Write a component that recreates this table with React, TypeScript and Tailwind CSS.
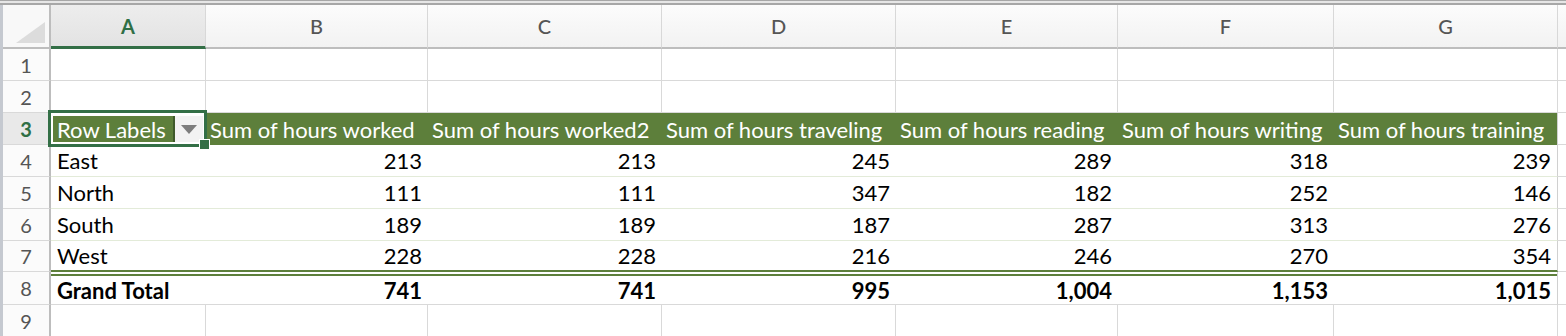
import React from "react";

const colW = ["w-[155px]", "w-[222px]", "w-[234px]", "w-[234px]", "w-[222px]", "w-[216px]", "w-[224px]"];
const letters = ["A", "B", "C", "D", "E", "F", "G"];
const heads = [
  "Sum of hours worked",
  "Sum of hours worked2",
  "Sum of hours traveling",
  "Sum of hours reading",
  "Sum of hours writing",
  "Sum of hours training",
];
const data: [string, ...string[]][] = [
  ["East", "213", "213", "245", "289", "318", "239"],
  ["North", "111", "111", "347", "182", "252", "146"],
  ["South", "189", "189", "187", "287", "313", "276"],
  ["West", "228", "228", "216", "246", "270", "354"],
];
const total = ["Grand Total", "741", "741", "995", "1,004", "1,153", "1,015"];

const GREEN = "#5d7f3b";

function RowHead({ n, h = "h-[32px]", selected = false }: { n: number; h?: string; selected?: boolean }) {
  return (
    <div
      className={`${h} w-[48px] shrink-0 border-r-2 border-b border-r-[#bdbdbd] border-b-[#d9d9d9] flex items-center justify-center text-[20px] ${
        selected ? "bg-[#e9e9e9] text-[#2f6f45] font-bold" : "bg-[#fbfbfb] text-[#555555]"
      }`}
    >
      {n}
    </div>
  );
}

function EmptyRow({ n }: { n: number }) {
  return (
    <div className="flex">
      <RowHead n={n} />
      {colW.map((w, i) => (
        <div key={i} className={`${w} h-[32px] shrink-0 border-r border-b border-[#d9d9d9]`} />
      ))}
      <div className="h-[32px] flex-1 border-b border-[#d9d9d9]" />
    </div>
  );
}

function PivotHeader() {
  return (
    <div className="flex">
      <RowHead n={3} selected />
      <div className="relative w-[155px] h-[32px] shrink-0 bg-white pt-[3px] pb-[3px] pl-[2px] pr-[3px] flex">
        <div className="flex-1 flex items-center pl-[4px] text-white text-[22px] whitespace-nowrap" style={{ background: GREEN }}>
          Row Labels
        </div>
        <div className="w-[30px] border-l-2 border-[#3f5a2b] bg-[#f2f2f2] flex items-center justify-center">
          <svg width="16" height="9" viewBox="0 0 16 9">
            <polygon points="0,0 16,0 8,9" fill="#7d7d7d" />
          </svg>
        </div>
        <div className="absolute -left-[3px] -right-[1px] -top-[3px] -bottom-[2px] border-[3px] border-[#336f46] pointer-events-none" />
        <div className="absolute left-[148px] top-[26px] w-[11px] h-[11px] z-10 border border-white bg-[#336f46]" />
      </div>
      {heads.map((t, i) => (
        <div
          key={i}
          className={`${colW[i + 1]} h-[32px] shrink-0 flex items-center pl-[4px] text-white text-[22px] whitespace-nowrap overflow-hidden ${
            i === 5 ? "border-r border-r-[#d0d0d0]" : ""
          }`}
          style={{ background: GREEN }}
        >
          {t}
        </div>
      ))}
      <div className="h-[32px] flex-1 border-b border-[#d9d9d9]" />
    </div>
  );
}

function DataRow({ n, cells, last }: { n: number; cells: string[]; last?: boolean }) {
  const h = last ? "h-[31px]" : "h-[32px]";
  const line = last ? "border-b-2 border-b-[#5d7f3b]" : "border-b border-b-[#e3ebd9]";
  return (
    <div className="flex">
      <RowHead n={n} h={h} />
      {cells.map((c, i) => (
        <div
          key={i}
          className={`${colW[i]} ${h} shrink-0 flex items-center text-[22px] text-black whitespace-nowrap ${line} ${
            i === 0 ? "justify-start pl-[6px]" : "justify-end pr-[6px]"
          } ${i === 6 ? "border-r border-r-[#d0d0d0]" : ""}`}
        >
          {c}
        </div>
      ))}
      <div className={`${h} flex-1 border-b border-[#d9d9d9]`} />
    </div>
  );
}

function TotalRow() {
  return (
    <div className="flex">
      <RowHead n={8} h="h-[33px]" />
      {total.map((c, i) => (
        <div
          key={i}
          className={`${colW[i]} h-[33px] shrink-0 flex items-center pt-[4px] font-bold text-[22px] text-black whitespace-nowrap border-b border-b-[#d9d9d9] shadow-[inset_0_2px_0_#ffffff,inset_0_4px_0_#5d7f3b] ${
            i === 0 ? "justify-start pl-[6px]" : "justify-end pr-[6px]"
          } ${i === 6 ? "border-r border-r-[#d0d0d0]" : ""}`}
        >
          {c}
        </div>
      ))}
      <div className="h-[33px] flex-1 border-b border-[#d9d9d9]" />
    </div>
  );
}

export default function App() {
  return (
    <div className="w-[1566px] h-[336px] overflow-hidden bg-white font-['Lato',sans-serif] flex flex-col">
      <div className="h-[5px] shrink-0 border-t border-b-2 border-[#a7a7a7] bg-[#e6e6e6]" />
      <div className="flex flex-1 min-h-0">
        <div className="w-[3px] shrink-0 bg-[#c5c9d0]" />
        <div className="flex-1 min-w-0 flex flex-col">
          {/* column headers */}
          <div className="flex h-[44px] shrink-0">
            <div className="relative w-[48px] shrink-0 border-r-2 border-b-2 border-[#bdbdbd] bg-[#f8f8f8]">
              <svg className="absolute left-[13px] top-[17px]" width="29" height="21" viewBox="0 0 29 21">
                <polygon points="29,0 29,21 0,21" fill="#dcdcdc" />
              </svg>
            </div>
            {letters.map((l, i) => (
              <div
                key={l}
                className={`${colW[i]} shrink-0 flex items-center justify-center text-[20px] border-r border-r-[#d8d8d8] ${
                  i === 0
                    ? "bg-gradient-to-b from-[#ededed] to-[#e3e3e3] border-b-[3px] border-b-[#336f46] text-[#2f6f45] font-bold"
                    : "bg-gradient-to-b from-[#fcfcfc] to-[#f2f2f2] border-b-2 border-b-[#bdbdbd] text-[#555555] font-medium"
                }`}
              >
                {l}
              </div>
            ))}
            <div className="flex-1 bg-gradient-to-b from-[#fcfcfc] to-[#f2f2f2] border-b-2 border-b-[#bdbdbd]" />
          </div>
          <EmptyRow n={1} />
          <EmptyRow n={2} />
          <PivotHeader />
          {data.map((r, i) => (
            <DataRow key={r[0]} n={i + 4} cells={r} last={i === 3} />
          ))}
          <TotalRow />
          <EmptyRow n={9} />
        </div>
      </div>
    </div>
  );
}
